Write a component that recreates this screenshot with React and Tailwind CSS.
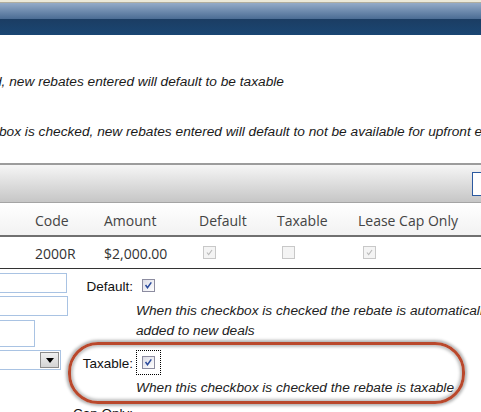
import React from "react";

function GridCheck({ checked }) {
  return (
    <span className="flex h-[13px] w-[13px] items-center justify-center border border-[#c8c8c8] bg-[#f4f4f4]">
      {checked && (
        <svg viewBox="0 0 13 13" className="h-[11px] w-[11px]">
          <path d="M3.5 6.5 L5.5 9 L9.5 3.5" fill="none" stroke="#b8b8b8" strokeWidth="1.2" />
        </svg>
      )}
    </span>
  );
}

function FormCheck({ focused }) {
  return (
    <span
      className={`flex p-[5px] border border-dotted ${focused ? "border-black" : "border-transparent"}`}
    >
      <span className="flex h-[13px] w-[13px] items-center justify-center border border-[#8c8ca0] bg-gradient-to-br from-[#dcdce6] to-[#ffffff]">
        <svg viewBox="0 0 13 13" className="h-[11px] w-[11px]">
          <path d="M3 6 L5.3 9 L9.8 2.8" fill="none" stroke="#2a4a9c" strokeWidth="1.8" />
        </svg>
      </span>
    </span>
  );
}

function FormRow({ label, focused, children, labelTop = "pt-[4px]" }) {
  return (
    <div className="flex">
      <div className={`w-[65px] shrink-0 text-right whitespace-nowrap text-[#111] ${labelTop}`}>{label}</div>
      <div className="ml-[3px] flex flex-col">
        <div className="flex">
          <FormCheck focused={focused} />
        </div>
        {children && (
          <div className="mt-[3px] text-[13.7px] italic leading-[20px] text-[#222] whitespace-nowrap">{children}</div>
        )}
      </div>
    </div>
  );
}

export default function App() {
  return (
    <div className="relative h-[412px] w-[481px] overflow-hidden bg-white font-['Liberation_Sans',Arial,sans-serif]">
      {/* window chrome */}
      <div className="h-[3px] border-b border-[#b0ad9e] bg-[#ece9d8]" />
      <div className="h-[16px] bg-gradient-to-b from-[#94abc8] to-[#4a6c94]" />
      <div className="h-[16px] bg-gradient-to-b from-[#1b3d63] to-[#1a4673]" />

      {/* settings text */}
      <div className="flex h-[128px] flex-col pt-[39px] text-[13.7px] italic text-[#1a1a1a] whitespace-nowrap">
        <div className="-ml-[6px] leading-[15px]">d, new rebates entered will default to be taxable</div>
        <div className="mt-[35px] -ml-[1px] leading-[15px]">
          box is checked, new rebates entered will default to not be available for upfront e
        </div>
      </div>

      {/* grid toolbar */}
      <div className="flex h-[40px] justify-end border-t-2 border-b border-t-[#9c9c9c] border-b-[#a4a4a4] bg-gradient-to-b from-[#f6f6f6] to-[#c6c6c6]">
        <div className="mt-[7px] h-[24px] w-[20px] -mr-[11px] border border-[#2c5aa0] bg-white" />
      </div>

      {/* grid header */}
      <div className="flex h-[34px] items-center border-b-2 border-[#707070] bg-gradient-to-b from-white to-[#f2f2f2] pt-[3px] font-['Open_Sans',sans-serif] text-[14px] text-[#444]">
        <div className="w-[35px]" />
        <div className="w-[69px]">Code</div>
        <div className="w-[95px]">Amount</div>
        <div className="w-[78px]">Default</div>
        <div className="w-[81px]">Taxable</div>
        <div className="whitespace-nowrap">Lease Cap Only</div>
      </div>

      {/* grid row */}
      <div className="flex h-[32px] items-center border-b border-[#333] font-['Open_Sans',sans-serif] text-[14px] text-[#333]">
        <div className="w-[35px]" />
        <div className="w-[69px] pt-[1px]">2000R</div>
        <div className="w-[95px] pt-[1px]">$2,000.00</div>
        <div className="w-[78px] pl-[4px]">
          <GridCheck checked />
        </div>
        <div className="w-[81px] pl-[5px]">
          <GridCheck />
        </div>
        <div className="pl-[5px]">
          <GridCheck checked />
        </div>
      </div>

      {/* edit form */}
      <div className="flex pt-[4px] text-[13.5px]">
        <div className="flex w-[68px] shrink-0 flex-col">
          <div className="h-[20px] w-[68px] -ml-[1px] border border-[#a9c3e3]" />
          <div className="mt-[3px] h-[20px] w-[69px] -ml-[1px] border border-[#a9c3e3]" />
          <div className="mt-[4px] h-[27px] w-[36px] -ml-[1px] border border-[#a9c3e3]" />
          <div className="mt-[3px] flex h-[20px] w-[62px] -ml-[1px] justify-end border border-[#a9c3e3] p-[1px]">
            <div className="flex w-[19px] items-center justify-center border border-[#8c8c8c] bg-gradient-to-b from-[#f0f0f0] to-[#d4d4d4]">
              <svg viewBox="0 0 8 5" className="h-[5px] w-[8px]">
                <path d="M0 0 H8 L4 5 Z" fill="#000" />
              </svg>
            </div>
          </div>
        </div>

        <div className="flex flex-col gap-[9px]">
          <FormRow label="Default:">
            When this checkbox is checked the rebate is automatically
            <br />
            added to new deals
          </FormRow>
          <FormRow label="Taxable:" focused>
            When this checkbox is checked the rebate is taxable
          </FormRow>
          <FormRow label="Cap Only:" labelTop="-mt-[3px]" />
        </div>
      </div>

      {/* highlight annotation */}
      <div className="pointer-events-none absolute left-[68px] top-[342px] h-[62px] w-[397px] rounded-[30px] border-[3px] border-[#b9482c] shadow-[0_0_3px_2px_rgba(0,0,0,0.3),inset_0_0_3px_2px_rgba(0,0,0,0.25)]" />
    </div>
  );
}
